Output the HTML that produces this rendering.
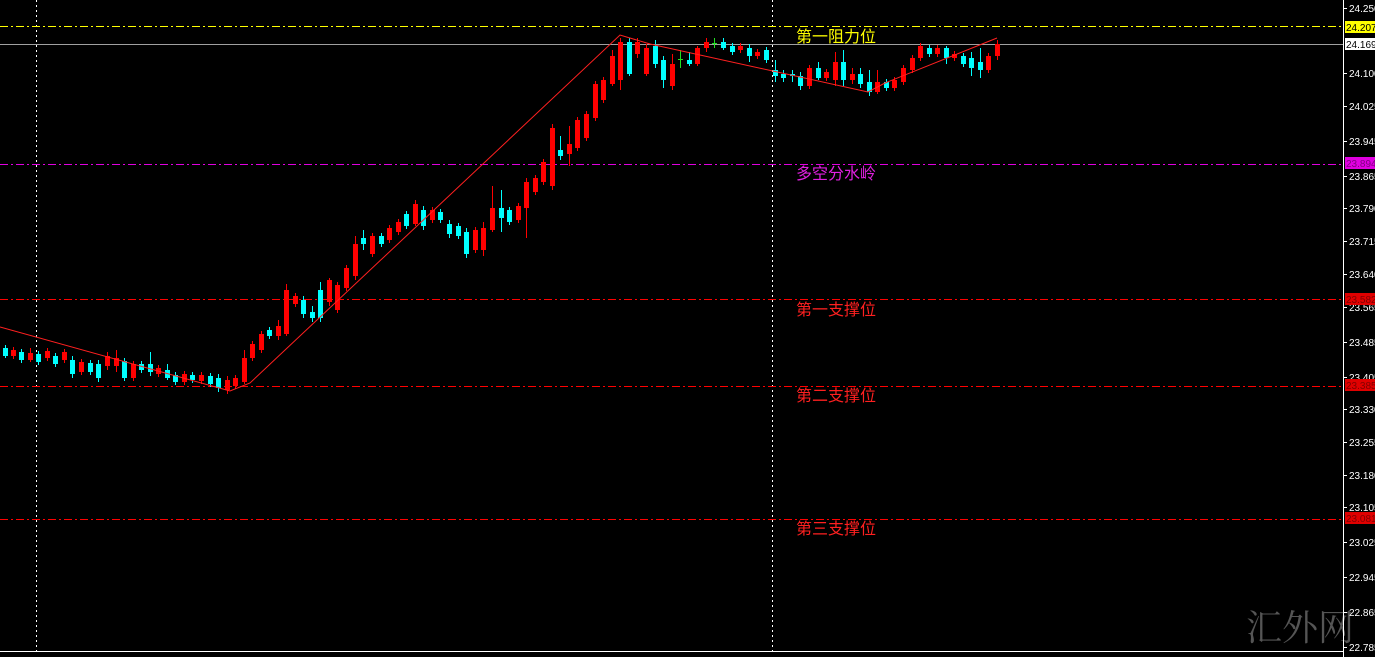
<!DOCTYPE html>
<html><head><meta charset="utf-8"><style>
html,body{margin:0;padding:0;background:#000;width:1375px;height:657px;overflow:hidden}
svg{display:block}
</style></head><body>
<svg width="1375" height="657" xmlns="http://www.w3.org/2000/svg" font-family="Liberation Sans, sans-serif">
<rect width="1375" height="657" fill="#000"/>
<g shape-rendering="crispEdges">
<line x1="36.5" y1="0" x2="36.5" y2="651" stroke="#fff" stroke-dasharray="2,3"/>
<line x1="772.5" y1="0" x2="772.5" y2="651" stroke="#fff" stroke-dasharray="2,3"/>
<line x1="0" y1="26.5" x2="1343" y2="26.5" stroke="#ffff00" stroke-dasharray="8,3,2,3"/>
<line x1="0" y1="44.5" x2="1343" y2="44.5" stroke="#a0a0a0"/>
<line x1="0" y1="164.5" x2="1343" y2="164.5" stroke="#e000e0" stroke-dasharray="8,3,2,3"/>
<line x1="0" y1="299.5" x2="1343" y2="299.5" stroke="#ff0000" stroke-dasharray="8,3,2,3"/>
<line x1="0" y1="386.5" x2="1343" y2="386.5" stroke="#ff0000" stroke-dasharray="8,3,2,3"/>
<line x1="0" y1="519.5" x2="1343" y2="519.5" stroke="#ff0000" stroke-dasharray="8,3,2,3"/>
</g>

<path stroke="#ff0000" fill="none" d="M13.5,347V359M30.5,348V362M47.5,348V361M64.5,349V363M81.5,359V375M107.5,352V370M116.5,350V372M133.5,361V381M158.5,365V377M184.5,371V385M201.5,372V384M227.5,376V394M235.5,375V389M244.5,350V384M252.5,341V361M261.5,331V353M278.5,320V340M286.5,284V336M295.5,293V307M329.5,278V306M337.5,282V313M346.5,265V291M355.5,236V280M372.5,233V257M389.5,225V243M398.5,219V235M415.5,200V226M432.5,207V223M475.5,227V253M483.5,222V256M492.5,186V232M518.5,203V223M526.5,178V238M535.5,175V195M543.5,159V185M552.5,124V190M569.5,126V166M577.5,117V151M586.5,111V141M595.5,81V121M603.5,77V103M612.5,50V86M620.5,38V90M637.5,38V58M646.5,44V76M672.5,54V90M697.5,46V66M706.5,38V52M740.5,43V53M757.5,49V59M809.5,65V89M826.5,69V81M835.5,52V86M852.5,68V84M877.5,70V94M894.5,77V91M903.5,65V85M912.5,55V73M920.5,43V61M937.5,45V57M954.5,51V61M988.5,53V73M997.5,40V60"/>
<path fill="#ff0000" d="M11,350h5V356h-5zM28,353h5V360h-5zM45,351h5V358h-5zM62,352h5V360h-5zM79,362h5V372h-5zM105,356h5V366h-5zM114,358h5V366h-5zM131,364h5V378h-5zM156,368h5V374h-5zM182,374h5V382h-5zM199,375h5V381h-5zM225,380h5V390h-5zM233,378h5V386h-5zM242,358h5V382h-5zM250,344h5V358h-5zM259,334h5V350h-5zM276,326h5V336h-5zM284,290h5V334h-5zM293,296h5V304h-5zM327,280h5V302h-5zM335,285h5V310h-5zM344,268h5V288h-5zM353,244h5V276h-5zM370,236h5V254h-5zM387,228h5V240h-5zM396,222h5V232h-5zM413,204h5V224h-5zM430,210h5V220h-5zM473,230h5V250h-5zM481,228h5V250h-5zM490,208h5V230h-5zM516,206h5V220h-5zM524,182h5V208h-5zM533,178h5V192h-5zM541,162h5V182h-5zM550,128h5V186h-5zM567,144h5V154h-5zM575,120h5V148h-5zM584,114h5V138h-5zM593,84h5V118h-5zM601,80h5V100h-5zM610,56h5V84h-5zM618,42h5V80h-5zM635,42h5V54h-5zM644,48h5V74h-5zM670,64h5V86h-5zM695,48h5V64h-5zM704,42h5V48h-5zM738,46h5V50h-5zM755,52h5V56h-5zM807,68h5V86h-5zM824,72h5V78h-5zM833,62h5V80h-5zM850,74h5V80h-5zM875,82h5V92h-5zM892,80h5V88h-5zM901,68h5V82h-5zM910,58h5V70h-5zM918,46h5V58h-5zM935,48h5V54h-5zM952,54h5V58h-5zM986,56h5V70h-5zM995,44h5V56h-5z"/>

<path stroke="#00ffff" fill="none" d="M5.5,345V358M21.5,349V363M38.5,351V365M55.5,353V367M72.5,356V378M90.5,360V375M98.5,360V382M124.5,358V381M141.5,361V373M150.5,352V376M167.5,364V380M175.5,372V385M192.5,372V383M210.5,373V387M218.5,374V392M269.5,327V339M303.5,296V318M312.5,306V322M320.5,282V322M363.5,230V250M381.5,233V247M406.5,211V229M423.5,206V230M440.5,209V223M449.5,220V238M458.5,223V239M466.5,228V258M501.5,190V232M509.5,207V225M560.5,136V160M629.5,38V76M655.5,40V68M663.5,56V88M689.5,52V66M723.5,38V50M732.5,43V55M749.5,44V62M766.5,47V63M775.5,60V82M783.5,70V82M792.5,70V82M800.5,72V90M818.5,62V80M843.5,50V86M860.5,68V88M869.5,70V96M886.5,79V91M929.5,45V57M946.5,46V64M963.5,53V67M971.5,52V76M980.5,48V78"/>
<path fill="#00ffff" d="M3,348h5V356h-5zM19,352h5V360h-5zM36,354h5V362h-5zM53,356h5V364h-5zM70,360h5V374h-5zM88,363h5V372h-5zM96,364h5V378h-5zM122,361h5V378h-5zM139,364h5V370h-5zM148,364h5V372h-5zM165,370h5V378h-5zM173,375h5V382h-5zM190,375h5V380h-5zM208,376h5V384h-5zM216,378h5V388h-5zM267,330h5V336h-5zM301,300h5V314h-5zM310,312h5V318h-5zM318,290h5V318h-5zM361,238h5V244h-5zM379,236h5V244h-5zM404,214h5V226h-5zM421,210h5V226h-5zM438,212h5V220h-5zM447,224h5V234h-5zM456,226h5V236h-5zM464,232h5V254h-5zM499,208h5V218h-5zM507,210h5V222h-5zM558,150h5V156h-5zM627,42h5V74h-5zM653,46h5V64h-5zM661,60h5V80h-5zM687,60h5V64h-5zM721,42h5V48h-5zM730,46h5V52h-5zM747,48h5V56h-5zM764,50h5V60h-5zM773,70h5V76h-5zM781,74h5V78h-5zM790,74h5V76h-5zM798,76h5V86h-5zM816,68h5V78h-5zM841,62h5V80h-5zM858,74h5V84h-5zM867,82h5V92h-5zM884,82h5V88h-5zM927,48h5V54h-5zM944,48h5V58h-5zM961,56h5V64h-5zM969,58h5V68h-5zM978,62h5V70h-5z"/>

<path stroke="#20e020" fill="none" d="M680.5,50V68M678,59.5H683M714.5,38V48M712,43.5H717"/>

<polyline points="0,327 230,391 250,383 620,35 650,44 868,92 885,83 997,38" fill="none" stroke="#ff2020" stroke-width="1"/>

<g font-size="16" font-family="'Noto Sans CJK SC', sans-serif">
<text x="796" y="42" fill="#ffff00">第一阻力位</text>
<text x="796" y="179" fill="#e020e0">多空分水岭</text>
<text x="796" y="315" fill="#ff2020">第一支撑位</text>
<text x="796" y="401" fill="#ff2020">第二支撑位</text>
<text x="796" y="534" fill="#ff2020">第三支撑位</text>
</g>
<text x="1246" y="640" font-size="36" fill="#555" font-family="'Noto Serif CJK SC', serif">汇外网</text>
<line x1="1343.5" y1="0" x2="1343.5" y2="657" stroke="#fff"/>
<line x1="0" y1="651.5" x2="1343" y2="651.5" stroke="#fff"/>

<g font-size="10" fill="#fff">
<path stroke="#fff" d="M1343,8.5h4M1343,73.5h4M1343,106.5h4M1343,141.5h4M1343,176.5h4M1343,208.5h4M1343,241.5h4M1343,274.5h4M1343,307.5h4M1343,342.5h4M1343,377.5h4M1343,409.5h4M1343,442.5h4M1343,475.5h4M1343,507.5h4M1343,542.5h4M1343,577.5h4M1343,612.5h4M1343,647.5h4"/>
<text x="1349" y="12">24.250</text>
<text x="1349" y="77">24.100</text>
<text x="1349" y="110">24.025</text>
<text x="1349" y="145">23.945</text>
<text x="1349" y="180">23.865</text>
<text x="1349" y="212">23.790</text>
<text x="1349" y="245">23.715</text>
<text x="1349" y="278">23.640</text>
<text x="1349" y="311">23.565</text>
<text x="1349" y="346">23.485</text>
<text x="1349" y="381">23.405</text>
<text x="1349" y="413">23.330</text>
<text x="1349" y="446">23.255</text>
<text x="1349" y="479">23.180</text>
<text x="1349" y="511">23.105</text>
<text x="1349" y="546">23.025</text>
<text x="1349" y="581">22.945</text>
<text x="1349" y="616">22.865</text>
<text x="1349" y="651">22.785</text>
<rect x="1345" y="21" width="30" height="12" fill="#ffff00"/><text x="1346" y="31" fill="#000">24.207</text>
<rect x="1345" y="38" width="30" height="12" fill="#fff"/><text x="1346" y="48" fill="#000">24.169</text>
<rect x="1345" y="157" width="30" height="12" fill="#e000e0"/><text x="1346" y="167" fill="#800080">23.894</text>
<rect x="1345" y="293" width="30" height="12" fill="#e00000"/><text x="1346" y="303" fill="#800000">23.582</text>
<rect x="1345" y="379" width="30" height="12" fill="#e00000"/><text x="1346" y="389" fill="#800000">23.385</text>
<rect x="1345" y="512" width="30" height="12" fill="#e00000"/><text x="1346" y="522" fill="#800000">23.081</text>
</g>
</svg>
</body></html>
